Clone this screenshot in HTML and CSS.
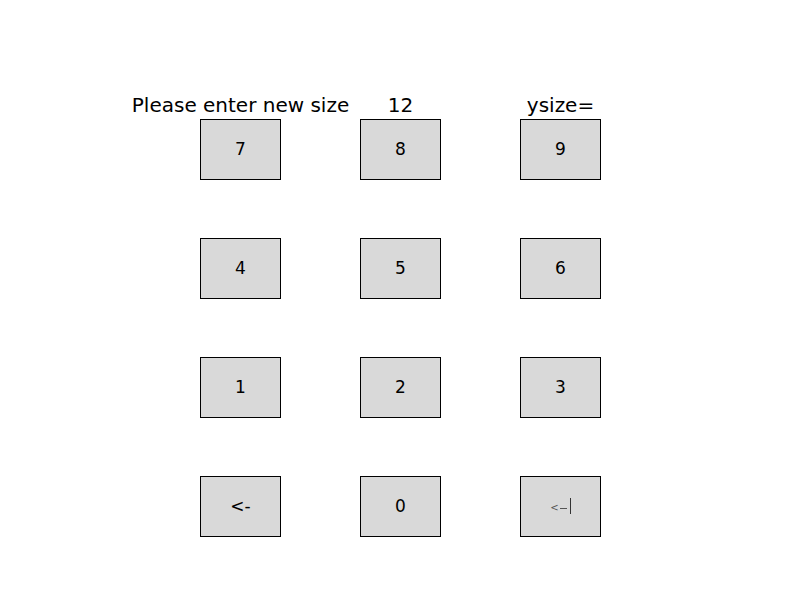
FILE: index.html
```html
<!DOCTYPE html>
<html lang="en">
<head>
  <meta charset="UTF-8">
  <title>Keypad</title>
  <link rel="stylesheet" href="styles.css">
</head>
<body>
  <div class="figure">
    <div class="header">
      <div class="cell"><span>Please enter new size</span></div>
      <div class="cell"><span>12</span></div>
      <div class="cell"><span>ysize=</span></div>
    </div>
    <div class="keypad">
      <button class="key">7</button>
      <button class="key">8</button>
      <button class="key">9</button>
      <button class="key">4</button>
      <button class="key">5</button>
      <button class="key">6</button>
      <button class="key">1</button>
      <button class="key">2</button>
      <button class="key">3</button>
      <button class="key">&lt;-</button>
      <button class="key">0</button>
      <button class="key enter"><span class="arrow">&lt;</span><span class="dash"></span><span class="bar"></span></button>
    </div>
  </div>
</body>
</html>
```

FILE: styles.css
```css
body {
  margin: 0;
  background: #fff;
  font-family: 'DejaVu Sans', sans-serif;
  color: #000;
}
.figure {
  width: 800px;
  height: 595px;
  padding-top: 93px;
  box-sizing: border-box;
}
.header, .keypad {
  display: grid;
  grid-template-columns: repeat(3, 81px);
  column-gap: 79px;
  width: 401px;
  margin: 0 0 0 200px;
}
.header {
  height: 26px;
  font-size: 20px;
  line-height: 24px;
}
.cell {
  display: flex;
  justify-content: center;
  white-space: nowrap;
}
.keypad {
  grid-auto-rows: 61px;
  row-gap: 58px;
}
.key {
  margin: 0;
  padding: 0 0 2px 0;
  background: #d9d9d9;
  border: 1px solid #000;
  border-radius: 0;
  font-family: 'DejaVu Sans', sans-serif;
  font-size: 17px;
  color: #000;
  display: flex;
  align-items: center;
  justify-content: center;
}
.enter {
  align-items: flex-end;
  padding: 0 0 22px 0;
  box-sizing: border-box;
}
.arrow {
  font-size: 10px;
  color: #555;
  line-height: 10px;
  margin-bottom: 1px;
}
.dash {
  display: inline-block;
  width: 7px;
  height: 1px;
  margin: 0 0 5px 1px;
  background: #555;
}
.bar {
  display: inline-block;
  width: 1px;
  height: 16px;
  margin-left: 3px;
  background: #333;
}
```
